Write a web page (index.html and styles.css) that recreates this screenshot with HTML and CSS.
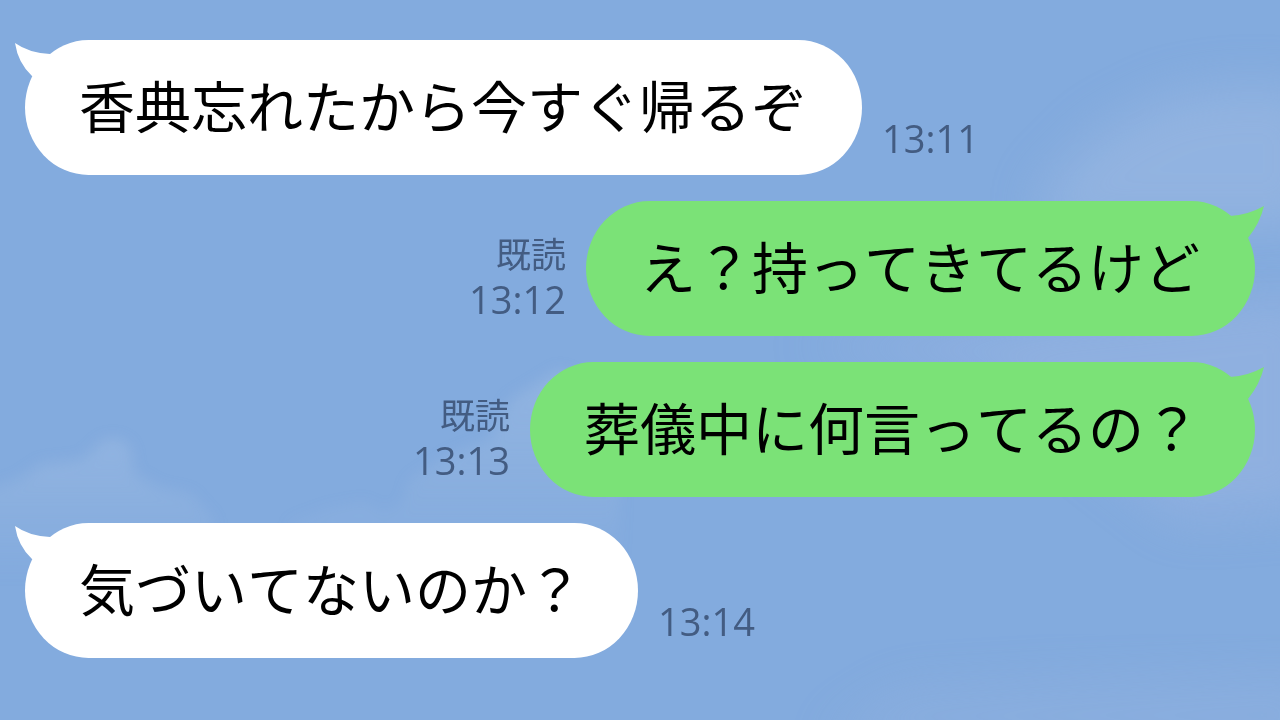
FILE: index.html
```
<!doctype html>
<html lang="ja">
    <head>
        <meta charset="utf-8">
        <meta name="viewport" content="width=device-width, initial-scale=1">
        <title>トーク</title>
        <link rel="stylesheet" href="styles.css">
    </head>

    <body>
        <svg class="sky" viewBox="0 0 1280 720" preserveAspectRatio="none" aria-hidden="true">
            <defs>
                <filter id="soft" x="-20%" y="-20%" width="140%" height="140%"><feGaussianBlur stdDeviation="7"/></filter>
                <filter id="haze" x="-40%" y="-40%" width="180%" height="180%"><feGaussianBlur stdDeviation="24"/></filter>
                <linearGradient id="fade" x1="0" y1="0" x2="0" y2="1">
                    <stop offset="0" stop-color="#a3bfe4" stop-opacity=".45"/>
                    <stop offset="1" stop-color="#a3bfe4" stop-opacity="0"/>
                </linearGradient>
            </defs>
            <!-- 左下の雲 -->
            <path fill="url(#fade)" filter="url(#soft)" d="M-20 492 L18 480 L42 464 L82 460 L102 442 Q118 434 130 448 L134 474 L160 488 L190 494 L214 520 L214 580 L-20 580Z"/>
            <path fill="url(#fade)" filter="url(#soft)" d="M290 522 L330 508 L365 502 L382 512 L402 505 L410 480 L450 455 L490 440 L510 400 L560 370 L620 400 L620 580 L290 580Z"/>
            <!-- 右側の雲 -->
            <path fill="#a0bbe3" opacity=".5" filter="url(#haze)" d="M1040 190 L1100 130 L1170 95 L1240 85 L1320 90 L1320 230 L1040 230Z"/>
            <path fill="#9bb5e2" opacity=".5" filter="url(#haze)" d="M800 345 L1320 290 L1320 510 L1180 520 L1000 380Z"/>
            <path fill="#9ab5e0" opacity=".3" filter="url(#haze)" d="M820 740 L900 690 L1080 680 L1320 670 L1320 760Z"/>
        </svg>

        <main class="talk">
            <div class="row">
                <p class="bubble">
                    <svg class="tail" viewBox="0 0 36 34" aria-hidden="true"><path d="M0 0Q14 10 35 11V33H17Q3 20 0 0Z"/></svg>
                    香典忘れたから今すぐ帰るぞ
                </p>
                <div class="info"><time>13:11</time></div>
            </div>
            <div class="row mine">
                <p class="bubble">
                    <svg class="tail" viewBox="0 0 36 34" aria-hidden="true"><path d="M36 0Q20 9 2 10V32H20Q32 17 36 0Z"/></svg>
                    え？持ってきてるけど
                </p>
                <div class="info"><span>既読</span><time>13:12</time></div>
            </div>
            <div class="row mine">
                <p class="bubble">
                    <svg class="tail" viewBox="0 0 36 34" aria-hidden="true"><path d="M36 0Q20 9 2 10V32H20Q32 17 36 0Z"/></svg>
                    葬儀中に何言ってるの？
                </p>
                <div class="info"><span>既読</span><time>13:13</time></div>
            </div>
            <div class="row">
                <p class="bubble">
                    <svg class="tail" viewBox="0 0 36 34" aria-hidden="true"><path d="M0 0Q14 10 35 11V33H17Q3 20 0 0Z"/></svg>
                    気づいてないのか？
                </p>
                <div class="info"><time>13:14</time></div>
            </div>
        </main>
    </body>
</html>
```
FILE: styles.css
```
*{margin:0;padding:0;box-sizing:border-box;}
body{
    background:#83abde;
    font-family:"Noto Sans CJK JP",sans-serif;
    font-kerning:none;
    color:#000;
}
.sky{
    position:fixed;
    top:0;
    left:0;
    width:100%;
    height:100%;
    z-index:-1;
}
.talk{
    display:flex;
    flex-direction:column;
    gap:26px;
    padding:40px 25px;
}
.row{
    display:flex;
    align-items:flex-end;
    gap:20px;
}
.mine{
    flex-direction:row-reverse;
}
.bubble{
    position:relative;
    padding:24px 55px 31px 54px;
    border-radius:64px / 68px;
    background:#fff;
    font-size:56px;
    line-height:80px;
}
.mine .bubble{
    background:#7be277;
}
/* 吹き出しのしっぽ */
.tail{
    position:absolute;
    top:3px;
    left:-10px;
    width:36px;
    height:34px;
    fill:#fff;
}
.mine .tail{
    top:5px;
    left:auto;
    right:-9px;
    fill:#7be277;
}
.info{
    display:flex;
    flex-direction:column;
    padding-bottom:14px;
    color:#435c82;
    font-size:35px;
    line-height:48px;
    white-space:nowrap;
}
.mine .info{
    align-items:flex-end;
}
.info time{
    font-family:"Open Sans","Noto Sans CJK JP",sans-serif;
    font-size:38px;
    line-height:45px;
}
```
